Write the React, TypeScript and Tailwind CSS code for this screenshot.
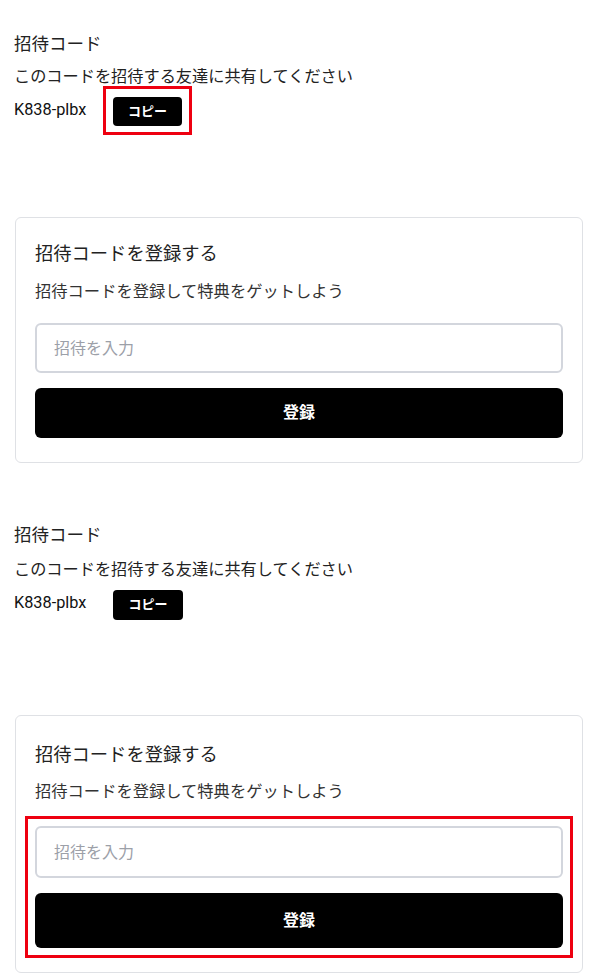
import React from "react";

const font = { fontFamily: "Roboto, 'Noto Sans CJK JP', sans-serif" };

function CodeSection({ top, titleGap, rowGap, btnW, btnH, annotated }: { top: string; titleGap: string; rowGap: string; btnW: string; btnH: string; annotated?: boolean }) {
  return (
    <div className={`pl-[14px] ${top}`}>
      <div className="text-[17.5px] leading-[24px] text-[#222]">招待コード</div>
      <div className={`${titleGap} text-[16.2px] leading-[24px] text-[#222]`}>このコードを招待する友達に共有してください</div>
      <div className={`${rowGap} flex items-center`}>
        <span className="w-[99px] text-[16.3px] leading-[22px] text-[#111] -mt-[4px]">K838-plbx</span>
        <div className="relative">
          <button className={`${btnW} ${btnH} bg-black text-white rounded-[4px] text-[13px] font-bold flex items-center justify-center`}>コピー</button>
          {annotated && (
            <div className="absolute left-[-10px] right-[-10px] top-[-11px] bottom-[-9px] border-[3px] border-[#ee0010] pointer-events-none" />
          )}
        </div>
      </div>
    </div>
  );
}

function RegisterCard({ top, pt, subGap, inputGap, inputH, btnGap, btnH, annotated }: { top: string; pt: string; subGap: string; inputGap: string; inputH: string; btnGap: string; btnH: string; annotated?: boolean }) {
  return (
    <div className={`${top} ml-[15px] w-[568px] border border-[#dfe1e5] rounded-[6px] px-[19px] ${pt} pb-[24px]`}>
      <div className="text-[18.3px] leading-[26px] text-[#222]">招待コードを登録する</div>
      <div className={`${subGap} text-[16.3px] leading-[24px] text-[#333]`}>招待コードを登録して特典をゲットしよう</div>
      <div className={`relative ${inputGap}`}>
        <input
          placeholder="招待を入力"
          className={`w-full ${inputH} border-2 border-[#d3d6dd] rounded-[6px] px-[17px] text-[16px] outline-none placeholder:text-[#9ca0a8]`}
          style={font}
        />
        <button className={`${btnGap} w-full ${btnH} bg-black text-white rounded-[6px] text-[16px] font-bold flex items-center justify-center`}>登録</button>
        {annotated && (
          <div className="absolute left-[-10px] right-[-10px] top-[-10px] bottom-[-10px] border-[3px] border-[#ee0010] pointer-events-none" />
        )}
      </div>
    </div>
  );
}

export default function App() {
  return (
    <div className="w-[597px] h-[976px] bg-white overflow-hidden" style={font}>
      <CodeSection top="pt-[32px]" titleGap="mt-[9px]" rowGap="mt-[8px]" btnW="w-[69px]" btnH="h-[29px]" annotated />
      <RegisterCard top="mt-[91px]" pt="pt-[23px]" subGap="mt-[13px]" inputGap="mt-[19px]" inputH="h-[50px]" btnGap="mt-[15px]" btnH="h-[50px]" />
      <CodeSection top="pt-[60px]" titleGap="mt-[11px]" rowGap="mt-[8px]" btnW="w-[70px]" btnH="h-[30px]" />
      <RegisterCard top="mt-[95px]" pt="pt-[26px]" subGap="mt-[12px]" inputGap="mt-[22px]" inputH="h-[52px]" btnGap="mt-[15px]" btnH="h-[55px]" annotated />
    </div>
  );
}
